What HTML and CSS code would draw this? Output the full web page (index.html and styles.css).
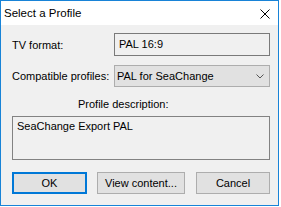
FILE: index.html
```html
<!DOCTYPE html>
<html>
<head>
<meta charset="utf-8">
<link rel="stylesheet" href="styles.css">
</head>
<body>
<div class="window">
  <div class="titlebar">
    <span class="title">Select a Profile</span>
    <svg class="close" width="10" height="10" viewBox="0 0 10 10"><path d="M0.5 0.5 L9.5 9.5 M9.5 0.5 L0.5 9.5" stroke="#000" stroke-width="1" fill="none"/></svg>
  </div>
  <div class="client">
    <div class="row row-tv">
      <span class="label">TV format:</span>
      <div class="field readonly">PAL 16:9</div>
    </div>
    <div class="row row-profile">
      <span class="label">Compatible profiles:</span>
      <div class="field combo">
        <span>PAL for SeaChange</span>
        <svg class="chev" width="8" height="5" viewBox="0 0 8 5"><path d="M0.5 0.5 L4 4 L7.5 0.5" stroke="#555" stroke-width="1" fill="none"/></svg>
      </div>
    </div>
    <div class="desc-label">Profile description:</div>
    <div class="desc">SeaChange Export PAL</div>
    <div class="buttons">
      <div class="btn btn-ok">OK</div>
      <div class="btn btn-view">View content...</div>
      <div class="btn btn-cancel">Cancel</div>
    </div>
  </div>
</div>
</body>
</html>
```
FILE: styles.css
```css
html, body {
  margin: 0;
  padding: 0;
  background: #ffffff;
}
body {
  font-family: "Liberation Sans", Arial, sans-serif;
  font-size: 11px;
  color: #000;
}
.window {
  width: 277px;
  height: 204px;
  border: 1px solid #1883d7;
  background: #f0f0f0;
  display: flex;
  flex-direction: column;
}
.titlebar {
  height: 24px;
  background: #fff;
  display: flex;
  align-items: center;
  justify-content: space-between;
  padding: 0 8px 0 3px;
}
.title {
  font-size: 11.5px;
  line-height: 14px;
}
.close {
  display: block;
  margin-top: 2px;
}
.client {
  flex: 1;
  padding: 8px 8px 0 11px;
  display: flex;
  flex-direction: column;
}
.row {
  display: flex;
  align-items: center;
  justify-content: space-between;
}
.row-profile {
  margin-top: 9px;
}
.field {
  width: 156px;
  box-sizing: border-box;
}
.readonly {
  height: 23px;
  border: 1px solid #7a7a7a;
  background: #f0f0f0;
  padding: 0 4px;
  line-height: 21px;
}
.combo {
  height: 22px;
  border: 1px solid #adadad;
  background: #e1e1e1;
  padding: 0 5px 0 2px;
  display: flex;
  align-items: center;
  justify-content: space-between;
}
.chev {
  display: block;
  margin-top: 1px;
}
.desc-label {
  margin-top: 10px;
  padding-left: 66px;
  line-height: 14px;
}
.desc {
  margin-top: 5px;
  width: 258px;
  height: 44px;
  box-sizing: border-box;
  border: 1px solid #828282;
  padding: 2px 4px;
  line-height: 14px;
}
.buttons {
  margin-top: 12px;
  display: flex;
  gap: 10px;
}
.btn {
  height: 22px;
  box-sizing: border-box;
  border: 1px solid #adadad;
  background: #e1e1e1;
  display: flex;
  align-items: center;
  justify-content: center;
}
.btn-ok {
  width: 75px;
  border: 2px solid #0078d7;
}
.btn-view {
  width: 88px;
}
.btn-cancel {
  width: 74px;
  margin-left: 1px;
}
```
